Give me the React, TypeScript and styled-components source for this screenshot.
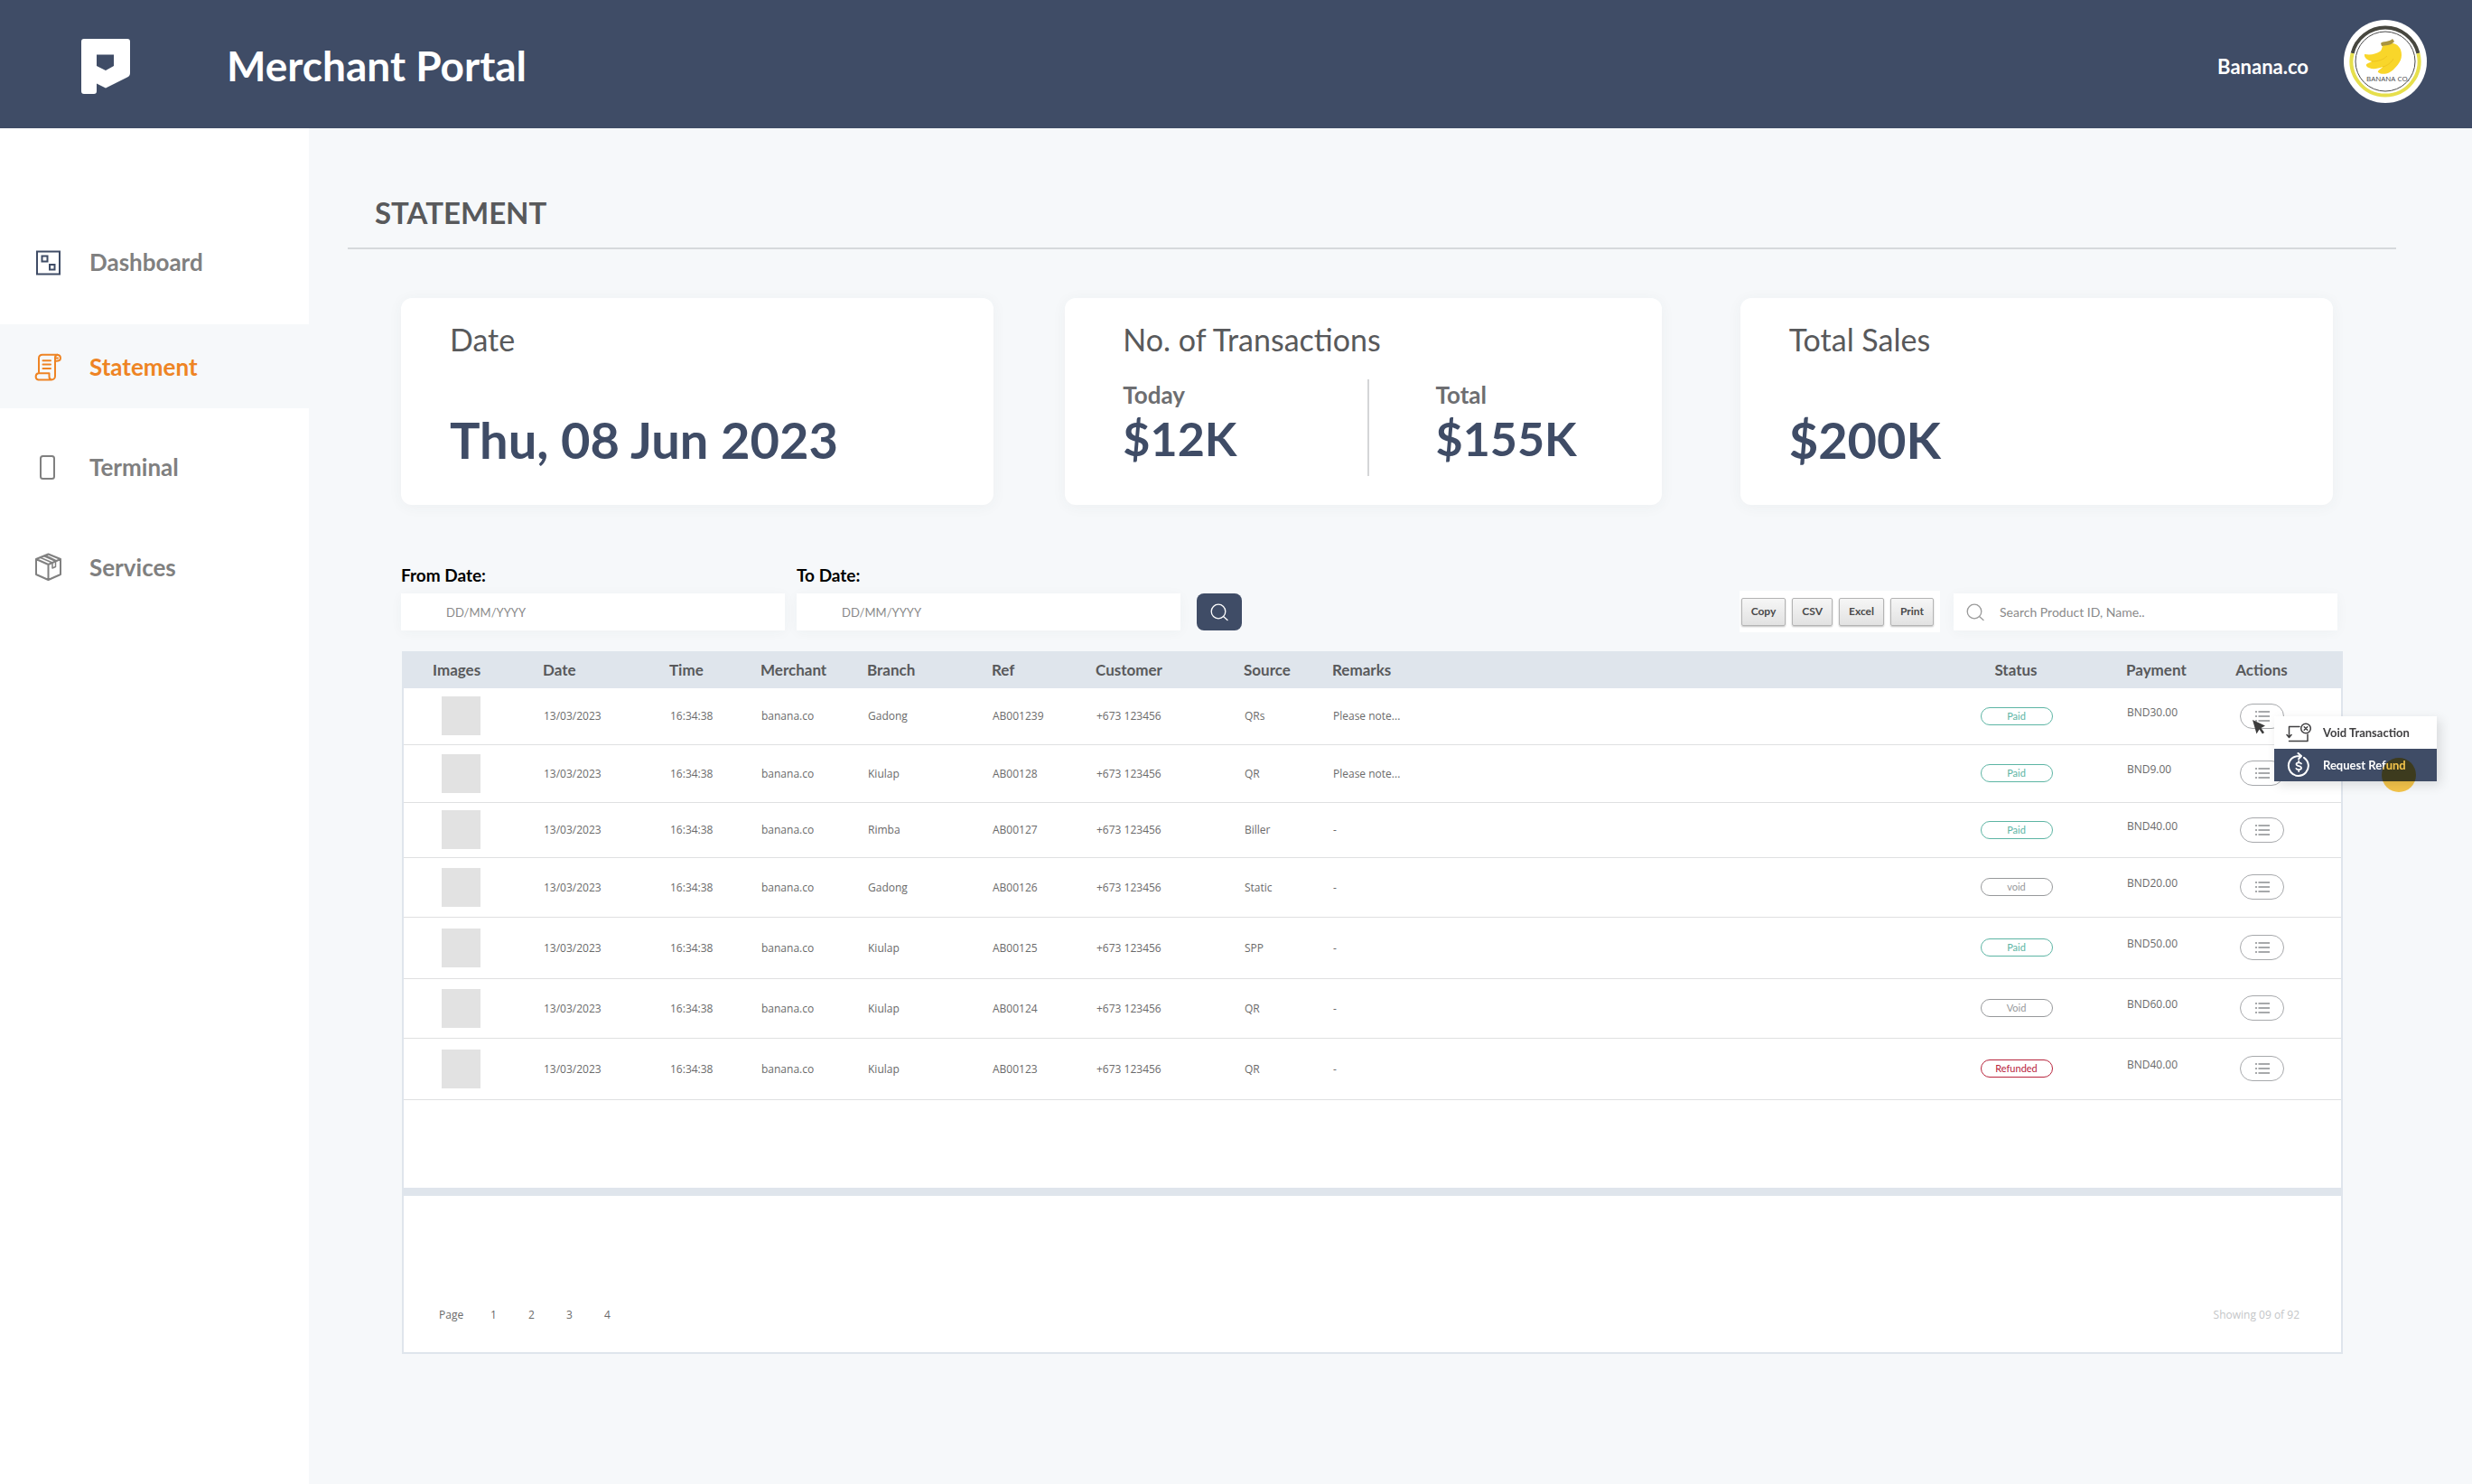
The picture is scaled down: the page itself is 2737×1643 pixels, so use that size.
import React from "react";
import styled, { createGlobalStyle, css } from "styled-components";

const navy = "#3f4c66";
const brandFont = `Lato, "Open Sans", sans-serif`;
const dataFont = `"Open Sans", "Noto Sans", sans-serif`;

const GlobalStyle = createGlobalStyle`
  *, *::before, *::after { box-sizing: border-box; }
  body { margin: 0; background: #f6f8fa; font-family: ${brandFont}; color: #58595b; }
  h1, h2, p, ul { margin: 0; padding: 0; }
  button, input { font: inherit; color: inherit; }
  svg { display: block; flex: none; }
`;

const Page = styled.div`
  min-height: 100vh;
  display: flex;
  flex-direction: column;
`;

const TopBar = styled.header`
  display: flex;
  align-items: center;
  height: 142px;
  padding: 4px 50px 0 90px;
  background: ${navy};
  color: #fff;
`;

const PortalName = styled.p`
  margin-left: 107px;
  font-size: 46px;
  font-weight: 700;
  line-height: 56px;
`;

const Account = styled.div`
  display: flex;
  align-items: center;
  gap: 39px;
  height: 92px;
  margin: 0 0 10px auto;
`;

const AccountName = styled.span`
  padding-top: 12px;
  font-size: 22px;
  font-weight: 700;
  line-height: 24px;
`;

const Body = styled.div`
  flex: 1;
  display: flex;
`;

const Sidebar = styled.nav`
  flex: none;
  width: 342px;
  padding-top: 101px;
  background: #fff;
`;

const NavList = styled.ul`
  display: flex;
  flex-direction: column;
  gap: 18px;
  list-style: none;

  li:first-child { margin-bottom: 5px; }
`;

const NavLink = styled.a<{ $active?: boolean }>`
  display: flex;
  align-items: center;
  gap: 30px;
  height: 93px;
  padding-left: 38px;
  font-size: 26px;
  font-weight: 700;
  line-height: 32px;
  text-decoration: none;
  color: ${(p) => (p.$active ? "#ee8424" : "#808080")};
  background: ${(p) => (p.$active ? "#f6f8fa" : "transparent")};
`;

const Main = styled.main`
  flex: 1;
  min-width: 0;
  padding: 73px 84px 80px 43px;
`;

const Heading = styled.h1`
  padding: 0 30px 19px;
  border-bottom: 2px solid #d6d9dc;
  font-size: 33px;
  font-weight: 700;
  line-height: 40px;
`;

const Content = styled.div`
  padding: 54px 59px 0;
`;

const Cards = styled.div`
  display: grid;
  grid-template-columns: 656fr 668fr 656fr;
  gap: 79px;
  padding-right: 11px;
`;

const Card = styled.section<{ $split?: boolean }>`
  display: flex;
  flex-direction: column;
  justify-content: space-between;
  height: 229px;
  padding: ${(p) => (p.$split ? "26px 64px 32px" : "26px 54px 40px")};
  margin-right: ${(p) => (p.$split ? "8px" : "0")};
  border-radius: 12px;
  background: #fff;
  box-shadow: 0 2px 16px rgba(60, 70, 80, 0.05);
`;

const CardTitle = styled.h2`
  font-size: 34px;
  font-weight: 400;
  line-height: 40px;
`;

const CardValue = styled.p<{ $large?: boolean }>`
  font-size: ${(p) => (p.$large ? "56px" : "52px")};
  font-weight: 700;
  line-height: 64px;
  color: ${navy};
`;

const Split = styled.div`
  display: grid;
  grid-template-columns: 271fr 261fr;
  height: 107px;
`;

const Figure = styled.div<{ $second?: boolean }>`
  padding-top: 1px;
  ${(p) => p.$second && css`
    padding-left: 73px;
    border-left: 2px solid #d4d5d7;
  `}
`;

const FigureLabel = styled.p`
  font-size: 26px;
  font-weight: 700;
  line-height: 32px;
  color: #6d6e71;
`;

const Filters = styled.form`
  display: flex;
  align-items: flex-end;
  margin-top: 66px;
  padding-right: 6px;
`;

const Field = styled.div`
  display: flex;
  flex-direction: column;
  gap: 8px;
  flex: 0 1 425px;
  margin-right: 13px;
`;

const FieldLabel = styled.label`
  font-size: 19px;
  font-weight: 700;
  line-height: 24px;
  color: #000;
`;

const softBox = css`
  height: 41px;
  background: #fff;
  box-shadow: 0 2px 14px rgba(60, 70, 80, 0.04);
`;

const DateInput = styled.input`
  ${softBox}
  width: 100%;
  border: 0;
  padding: 0 50px;
  font-size: 13px;
  &::placeholder { color: #8a8a8a; opacity: 1; }
`;

const FindButton = styled.button`
  display: grid;
  place-items: center;
  width: 50px;
  height: 41px;
  margin-left: 5px;
  padding: 0;
  border: 0;
  border-radius: 8px;
  background: ${navy};
  color: #fff;
`;

const Exports = styled.div`
  display: flex;
  align-items: center;
  gap: 7px;
  height: 46px;
  margin: 0 15px -2px auto;
  padding: 0 7px 0 2px;
  background: #fff;
`;

const ExportButton = styled.button`
  height: 31px;
  padding: 0 10px;
  border: 1px solid #b4b4b4;
  border-radius: 2px;
  background: linear-gradient(#f6f6f6, #e2e2e2);
  box-shadow: 0 1px 2px rgba(0, 0, 0, 0.25);
  font-size: 12px;
  font-weight: 700;
  line-height: 16px;
  color: #4a4a4a;
`;

const SearchBox = styled.label`
  ${softBox}
  display: flex;
  align-items: center;
  gap: 17px;
  flex: 0 1 425px;
  padding-left: 14px;
  color: #9a9a9a;
`;

const SearchInput = styled.input`
  flex: 1;
  min-width: 0;
  border: 0;
  padding: 0;
  background: transparent;
  font-size: 14px;
  &::placeholder { color: #8a8a8a; opacity: 1; }
`;

const Panel = styled.section`
  margin: 23px 0 0 1px;
  border: 2px solid #dfe5ec;
  border-top: 0;
  background: #fff;
`;

const Table = styled.table`
  width: 100%;
  table-layout: fixed;
  border-collapse: separate;
  border-spacing: 0;
`;

type CellKind = { $kind?: "image" | "center" | "payment" | "actions" };

const HeadCell = styled.th<CellKind>`
  height: 41px;
  padding: 0;
  padding-left: ${(p) => (p.$kind === "image" ? "32px" : "0")};
  padding-right: ${(p) => (p.$kind === "actions" ? "14px" : "0")};
  background: #dfe5ec;
  font-size: 17px;
  font-weight: 700;
  line-height: 20px;
  white-space: nowrap;
  text-align: ${(p) => (p.$kind === "center" || p.$kind === "actions" ? "center" : "left")};
`;

const Row = styled.tr<{ $height: number }>`
  height: ${(p) => p.$height}px;
`;

const Cell = styled.td<CellKind>`
  padding: 0;
  padding-left: ${(p) => (p.$kind === "image" ? "42px" : "1px")};
  padding-right: ${(p) => (p.$kind === "actions" ? "14px" : "0")};
  padding-bottom: ${(p) => (p.$kind === "payment" ? "9px" : p.$kind ? "1px" : "0")};
  border-bottom: 1px solid #dfe0e1;
  font-family: ${dataFont};
  font-size: 12px;
  line-height: 16px;
  color: #6a6a6a;
  white-space: nowrap;
  text-align: ${(p) => (p.$kind === "center" || p.$kind === "actions" ? "center" : "left")};
`;

const Thumb = styled.div`
  width: 43px;
  height: 43px;
  background: #e2e2e2;
`;

const tones = { paid: "#5db5a4", void: "#97999b", refunded: "#b8243c" };
type Tone = keyof typeof tones;

const Badge = styled.span<{ $tone: Tone }>`
  display: inline-block;
  width: 80px;
  height: 20px;
  border: 1px solid ${(p) => tones[p.$tone]};
  border-radius: 10px;
  font-family: ${brandFont};
  font-size: 11px;
  line-height: 18px;
  color: ${(p) => tones[p.$tone]};
  vertical-align: middle;
`;

const ActionAnchor = styled.div`
  position: relative;
  width: 49px;
  margin: 0 auto;
`;

const ActionButton = styled.button`
  display: grid;
  place-items: center;
  width: 49px;
  height: 28px;
  padding: 0;
  border: 1px solid #a7a9ac;
  border-radius: 14px;
  background: #fff;
  color: #8b8d90;
`;

const Menu = styled.div`
  position: absolute;
  z-index: 2;
  top: 14px;
  left: 38px;
  width: 180px;
  box-shadow: 4px 4px 12px rgba(0, 0, 0, 0.12);
`;

const MenuItem = styled.button<{ $selected?: boolean }>`
  display: grid;
  grid-template-columns: 28px 1fr;
  align-items: center;
  gap: 13px;
  width: 100%;
  height: 36px;
  padding: 0 0 0 13px;
  border: 0;
  font-family: ${brandFont};
  font-size: 13px;
  font-weight: 700;
  line-height: 16px;
  text-align: left;
  background: ${(p) => (p.$selected ? navy : "#fff")};
  color: ${(p) => (p.$selected ? "#fff" : "#414042")};
`;

const Pointer = styled.svg`
  position: absolute;
  z-index: 3;
  top: 18px;
  left: 14px;
`;

const TapSpot = styled.span`
  position: absolute;
  z-index: 4;
  top: 46px;
  left: 119px;
  width: 38px;
  height: 38px;
  border-radius: 50%;
  background: #f4c44a;
  mix-blend-mode: multiply;
`;

const Divider = styled.div`
  height: 9px;
  margin-top: 97px;
  background: #dfe5ec;
`;

const Footer = styled.footer`
  display: flex;
  align-items: center;
  justify-content: space-between;
  padding: 120px 46px 29px 39px;
  font-family: ${dataFont};
  font-size: 12px;
  line-height: 24px;
  color: #6a6a6a;
`;

const Pager = styled.nav`
  display: flex;
  align-items: center;
`;

const PagerLabel = styled.span`
  width: 42px;
`;

const PageLink = styled.a`
  width: 42px;
  padding-left: 15px;
  text-decoration: none;
  color: inherit;
`;

const Showing = styled.span`
  color: #c4c6c8;
`;

const LogoMark = () => (
  <svg width="54" height="61" viewBox="0 0 54 61" fill="#fff" fillRule="evenodd" aria-hidden="true">
    <path d="M3 0H51a3 3 0 0 1 3 3V38a5 5 0 0 1-3 4.500L27 54.500 17 49.500V58a3 3 0 0 1-3 3H3a3 3 0 0 1-3-3V3a3 3 0 0 1 3-3ZM17 17.500V30L27 35 36 30V17.500Z" />
  </svg>
);

const BananaLogo = () => (
  <svg width="92" height="92" viewBox="0 0 92 92" role="img" aria-label="Banana Co.">
    <circle cx="46" cy="46" r="46" fill="#fff" />
    <path d="M9.600 37A37.500 37.500 0 0 1 82.400 37" fill="none" stroke="#47473f" strokeWidth="4" />
    <path d="M9.600 37A37.500 37.500 0 1 0 82.400 37" fill="none" stroke="#e6df4c" strokeWidth="4" />
    <circle cx="46" cy="46" r="33" fill="none" stroke="#4a4a4a" strokeWidth="1" />
    <path d="M44 27C50 24 60 25 63 33C66 42 62 48 56 54C52 59 43 62 38 58C37 56 42 54 43 52C36 55 28 55 25 51C24 48 28 48 31 46C27 45 22 42 23 38C30 39 35 38 40 35C43 33 42 29 44 27Z" fill="#f9d62a" />
    <path d="M31 46C38 46 44 44 48 40M43 52C48 51 53 47 55 43" fill="none" stroke="#efc51f" strokeWidth="1" />
    <path d="M41 26C43 23 50 25 54 21L56 24C52 29 46 28 42 29Z" fill="#aa9440" />
    <text x="25" y="68" fontFamily={dataFont} fontSize="8" fill="#474747">BANANA CO.</text>
  </svg>
);

const stroke = { fill: "none", stroke: "currentColor", strokeLinecap: "round", strokeLinejoin: "round" } as const;

const DashboardIcon = () => (
  <svg width="31" height="30" viewBox="0 0 31 30" fill="none" stroke={navy} strokeWidth="2" aria-hidden="true">
    <path d="M3 3.500H28V28.500H3Z" />
    <path d="M8.500 8.500H14.500V14.500H8.500ZM17 18H22.500V23.500H17Z" />
  </svg>
);

const StatementIcon = () => (
  <svg width="31" height="32" viewBox="0 0 31 32" {...stroke} strokeWidth="2" aria-hidden="true">
    <path d="M5 22V6.500A4 4 0 0 1 9 2.800H25.500A3.800 3.800 0 0 1 29 6.500C29 9 27 10 23 9.700V26.500A4 4 0 0 1 19 30.500H4.500A3.700 3.700 0 0 1 4.500 23.300H16.500V27A3.500 3.500 0 0 0 19 30.500" />
    <path d="M25.500 2.800A3.500 3.500 0 0 0 23 6.500V9.700M24.500 6.500H26" />
    <path d="M9.500 9.300H18M9.500 13.500H18M9.500 18H18" />
  </svg>
);

const TerminalIcon = () => (
  <svg width="31" height="30" viewBox="0 0 31 30" {...stroke} strokeWidth="2" aria-hidden="true">
    <rect x="7" y="3" width="15" height="25" rx="2.500" />
  </svg>
);

const ServicesIcon = () => (
  <svg width="31" height="32" viewBox="0 0 31 32" {...stroke} strokeWidth="2" aria-hidden="true">
    <path d="M15.500 1.500 29 7V24L15.500 30 2 24V7ZM2 7 15.500 13 29 7M15.500 13V30" />
    <path d="M6.500 5.300 20 11V17L23.500 15.500V9.300L10.500 3.600M24.500 9 12.500 3" strokeWidth="1.500" />
  </svg>
);

const SearchIcon = () => (
  <svg width="20" height="20" viewBox="0 0 20 20" {...stroke} strokeWidth="1.300" aria-hidden="true">
    <circle cx="9" cy="9" r="7.800" />
    <path d="M14.500 14.500 19 18.500" />
  </svg>
);

const ListIcon = () => (
  <svg width="18" height="14" viewBox="0 0 18 14" fill="none" stroke="currentColor" strokeWidth="1.500" aria-hidden="true">
    <path d="M1 2H3M1 7H3M1 12H3M4.500 2H17M4.500 7H17M4.500 12H17" />
  </svg>
);

const VoidIcon = () => (
  <svg width="28" height="22" viewBox="0 0 28 22" {...stroke} strokeWidth="1.500" aria-hidden="true">
    <path d="M15 4.500H3.500V16M1 13.500 3.500 16.500 6 13.500M3.500 20.500H24V13" />
    <circle cx="22" cy="6.500" r="5.300" />
    <path d="M20.200 4.700 23.800 8.300M23.800 4.700 20.200 8.300" />
  </svg>
);

const RefundIcon = () => (
  <svg width="28" height="28" viewBox="0 0 28 28" {...stroke} strokeWidth="2" aria-hidden="true">
    <path d="M20 5.800A11 11 0 1 1 8 5.600C10 4.300 12 4 16 4M13.500 1 17 4 14 7.300" />
    <path d="M17 12.500C16.500 11 11.500 10.600 11.500 13C11.500 15.800 17 14.500 17 17.300C17 19.800 11.800 19.500 11.300 17.800M14.200 9.500V11M14.200 19.500V21" strokeWidth="1.800" />
  </svg>
);

type Transaction = {
  branch: string;
  reference: string;
  source: string;
  remarks: string;
  status: string;
  tone: Tone;
  payment: string;
  height: number;
};

const transactions: Transaction[] = [
  { branch: "Gadong", reference: "AB001239", source: "QRs", remarks: "Please note...", status: "Paid", tone: "paid", payment: "BND30.00", height: 63 },
  { branch: "Kiulap", reference: "AB00128", source: "QR", remarks: "Please note...", status: "Paid", tone: "paid", payment: "BND9.00", height: 64 },
  { branch: "Rimba", reference: "AB00127", source: "Biller", remarks: "-", status: "Paid", tone: "paid", payment: "BND40.00", height: 61 },
  { branch: "Gadong", reference: "AB00126", source: "Static", remarks: "-", status: "void", tone: "void", payment: "BND20.00", height: 66 },
  { branch: "Kiulap", reference: "AB00125", source: "SPP", remarks: "-", status: "Paid", tone: "paid", payment: "BND50.00", height: 68 },
  { branch: "Kiulap", reference: "AB00124", source: "QR", remarks: "-", status: "Void", tone: "void", payment: "BND60.00", height: 66 },
  { branch: "Kiulap", reference: "AB00123", source: "QR", remarks: "-", status: "Refunded", tone: "refunded", payment: "BND40.00", height: 68 },
];

const columns: { title: string; width?: number; kind?: CellKind["$kind"] }[] = [
  { title: "Images", width: 154, kind: "image" },
  { title: "Date", width: 140 },
  { title: "Time", width: 101 },
  { title: "Merchant", width: 118 },
  { title: "Branch", width: 138 },
  { title: "Ref", width: 115 },
  { title: "Customer", width: 164 },
  { title: "Source", width: 98 },
  { title: "Remarks" },
  { title: "Status", width: 244, kind: "center" },
  { title: "Payment", width: 76 },
  { title: "Actions", width: 162, kind: "actions" },
];

const navItems = [
  { label: "Dashboard", icon: <DashboardIcon /> },
  { label: "Statement", icon: <StatementIcon />, active: true },
  { label: "Terminal", icon: <TerminalIcon /> },
  { label: "Services", icon: <ServicesIcon /> },
];

const RowActions = ({ open }: { open: boolean }) => (
  <ActionAnchor>
    <ActionButton type="button" aria-label="Row actions" aria-expanded={open}>
      <ListIcon />
    </ActionButton>
    {open && (
      <>
        <Pointer width="15" height="17" viewBox="0 0 15 17" aria-hidden="true">
          <path d="M0 0 14 6.500 9.500 9 13 14 11 15.500 7.500 10.500 4.500 15.500Z" fill="#3d3d3d" />
        </Pointer>
        <Menu>
          <MenuItem type="button"><VoidIcon />Void Transaction</MenuItem>
          <MenuItem type="button" $selected><RefundIcon />Request Refund</MenuItem>
          <TapSpot />
        </Menu>
      </>
    )}
  </ActionAnchor>
);

export default function App() {
  return (
    <Page>
      <GlobalStyle />
      <TopBar>
        <LogoMark />
        <PortalName>Merchant Portal</PortalName>
        <Account>
          <AccountName>Banana.co</AccountName>
          <BananaLogo />
        </Account>
      </TopBar>
      <Body>
        <Sidebar aria-label="Main">
          <NavList>
            {navItems.map((item) => (
              <li key={item.label}>
                <NavLink href="#" $active={item.active}>{item.icon}{item.label}</NavLink>
              </li>
            ))}
          </NavList>
        </Sidebar>
        <Main>
          <Heading>STATEMENT</Heading>
          <Content>
            <Cards>
              <Card>
                <CardTitle>Date</CardTitle>
                <CardValue $large>Thu, 08 Jun 2023</CardValue>
              </Card>
              <Card $split>
                <CardTitle>No. of Transactions</CardTitle>
                <Split>
                  <Figure>
                    <FigureLabel>Today</FigureLabel>
                    <CardValue>$12K</CardValue>
                  </Figure>
                  <Figure $second>
                    <FigureLabel>Total</FigureLabel>
                    <CardValue>$155K</CardValue>
                  </Figure>
                </Split>
              </Card>
              <Card>
                <CardTitle>Total Sales</CardTitle>
                <CardValue $large>$200K</CardValue>
              </Card>
            </Cards>
            <Filters onSubmit={(e) => e.preventDefault()}>
              <Field>
                <FieldLabel htmlFor="from-date">From Date:</FieldLabel>
                <DateInput id="from-date" type="text" placeholder="DD/MM/YYYY" />
              </Field>
              <Field>
                <FieldLabel htmlFor="to-date">To Date:</FieldLabel>
                <DateInput id="to-date" type="text" placeholder="DD/MM/YYYY" />
              </Field>
              <FindButton type="submit" aria-label="Find"><SearchIcon /></FindButton>
              <Exports>
                {["Copy", "CSV", "Excel", "Print"].map((name) => (
                  <ExportButton key={name} type="button">{name}</ExportButton>
                ))}
              </Exports>
              <SearchBox>
                <SearchIcon />
                <SearchInput type="text" aria-label="Search products" placeholder="Search Product ID, Name.." />
              </SearchBox>
            </Filters>
            <Panel>
              <Table>
                <colgroup>
                  {columns.map((c) => <col key={c.title} width={c.width} />)}
                </colgroup>
                <thead>
                  <tr>
                    {columns.map((c) => <HeadCell key={c.title} scope="col" $kind={c.kind}>{c.title}</HeadCell>)}
                  </tr>
                </thead>
                <tbody>
                  {transactions.map((t, i) => (
                    <Row key={t.reference} $height={t.height}>
                      <Cell $kind="image"><Thumb /></Cell>
                      <Cell>13/03/2023</Cell>
                      <Cell>16:34:38</Cell>
                      <Cell>banana.co</Cell>
                      <Cell>{t.branch}</Cell>
                      <Cell>{t.reference}</Cell>
                      <Cell>+673 123456</Cell>
                      <Cell>{t.source}</Cell>
                      <Cell>{t.remarks}</Cell>
                      <Cell $kind="center"><Badge $tone={t.tone}>{t.status}</Badge></Cell>
                      <Cell $kind="payment">{t.payment}</Cell>
                      <Cell $kind="actions"><RowActions open={i === 0} /></Cell>
                    </Row>
                  ))}
                </tbody>
              </Table>
              <Divider />
              <Footer>
                <Pager aria-label="Pages">
                  <PagerLabel>Page</PagerLabel>
                  {[1, 2, 3, 4].map((n) => <PageLink key={n} href="#">{n}</PageLink>)}
                </Pager>
                <Showing>Showing 09 of 92</Showing>
              </Footer>
            </Panel>
          </Content>
        </Main>
      </Body>
    </Page>
  );
}
